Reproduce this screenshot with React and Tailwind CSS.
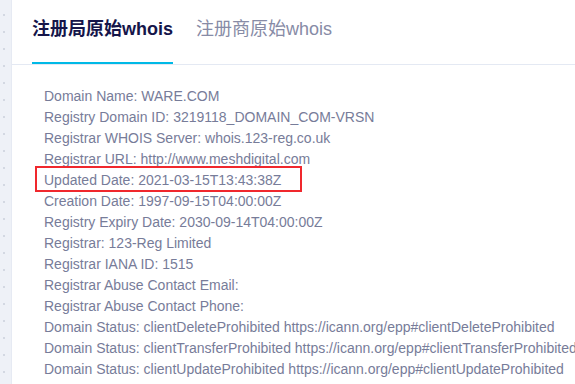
const lines = [
  "Domain Name: WARE.COM",
  "Registry Domain ID: 3219118_DOMAIN_COM-VRSN",
  "Registrar WHOIS Server: whois.123-reg.co.uk",
  "Registrar URL: http://www.meshdigital.com",
  "Updated Date: 2021-03-15T13:43:38Z",
  "Creation Date: 1997-09-15T04:00:00Z",
  "Registry Expiry Date: 2030-09-14T04:00:00Z",
  "Registrar: 123-Reg Limited",
  "Registrar IANA ID: 1515",
  "Registrar Abuse Contact Email:",
  "Registrar Abuse Contact Phone:",
  "Domain Status: clientDeleteProhibited https://icann.org/epp#clientDeleteProhibited",
  "Domain Status: clientTransferProhibited https://icann.org/epp#clientTransferProhibited",
  "Domain Status: clientUpdateProhibited https://icann.org/epp#clientUpdateProhibited",
];

function App() {
  return (
    <div className="flex h-[384px] w-[575px] overflow-hidden bg-white font-['Liberation_Sans','Noto_Sans_CJK_SC',sans-serif]">
      <div className="flex w-[12px] shrink-0 flex-col gap-[15px] border-r border-[#e6eaf3] bg-[#eef1f7] pl-[3px] pt-[14px]">
        {Array.from({ length: 22 }).map((_, i) => (
          <span key={i} className="block h-[2px] w-[2px] bg-[#d3d8e2]" />
        ))}
      </div>

      <div className="min-w-0 flex-1">
        <div className="flex h-[65px] gap-[23px] border-b border-[#e4e9f3] pl-[20px]">
          <div className="h-[64px] border-b-2 border-[#00b9e6] pt-[17px] text-[18px] font-bold leading-[24px] text-[#15154a]">
            注册局原始whois
          </div>
          <div className="h-[64px] pt-[17px] text-[18px] leading-[24px] text-[#878ba6]">
            注册商原始whois
          </div>
        </div>

        <div className="whitespace-nowrap pl-[32px] pt-[21px] text-[14px] leading-[21px] text-[#777c99]">
          {lines.map((l, i) => (
            <div key={i} className="relative">
              {l}
              {i === 4 && (
                <span className="absolute -left-[9px] -top-[4px] h-[26px] w-[267px] border-2 border-[#f0282d]" />
              )}
            </div>
          ))}
        </div>
      </div>
    </div>
  );
}

export default App;
